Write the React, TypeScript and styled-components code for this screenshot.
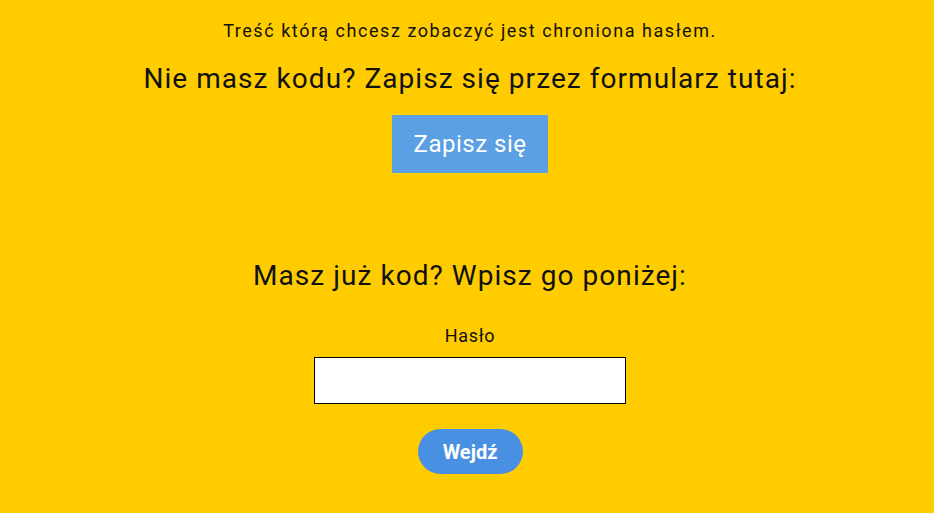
import styled, { createGlobalStyle } from "styled-components";

const yellow = "#ffcc00";
const ink = "#111111";

const GlobalStyle = createGlobalStyle`
  html, body {
    margin: 0;
    padding: 0;
    background: ${yellow};
  }
  body {
    font-family: Roboto, "Noto Sans", sans-serif;
    color: ${ink};
  }
`;

const Page = styled.main`
  min-height: 513px;
  display: flex;
  flex-direction: column;
  align-items: center;
  padding: 19px 0 0 6px;
  box-sizing: border-box;
`;

const Notice = styled.p`
  margin: 0;
  font-size: 18px;
  line-height: 24px;
  letter-spacing: 1.55px;
`;

interface HeadingProps {
  gap: number;
}

const Heading = styled.h2<HeadingProps>`
  margin: ${(props) => props.gap}px 0 0;
  font-size: 28px;
  line-height: 36px;
  font-weight: 400;
  letter-spacing: 1.05px;
`;

const SignupButton = styled.a`
  margin-top: 18px;
  display: flex;
  align-items: center;
  justify-content: center;
  width: 156px;
  height: 58px;
  background: #5aa0e2;
  color: #ffffff;
  font-size: 24px;
  letter-spacing: 0.5px;
  text-decoration: none;
`;

const Form = styled.form`
  display: flex;
  flex-direction: column;
  align-items: center;
  margin-top: 30px;
`;

const Label = styled.label`
  font-size: 18px;
  line-height: 24px;
  letter-spacing: 0.7px;
`;

const PasswordInput = styled.input`
  margin-top: 9px;
  width: 312px;
  height: 47px;
  box-sizing: border-box;
  border: 1px solid #000;
  background: #fff;
  outline: none;
`;

const EnterButton = styled.button`
  margin-top: 25px;
  width: 105px;
  height: 45px;
  border: none;
  border-radius: 23px;
  background: #4a90e2;
  color: #fff;
  font-family: Roboto, "Noto Sans", sans-serif;
  font-size: 20px;
  font-weight: 700;
`;

export default function App() {
  return (
    <>
      <GlobalStyle />
      <Page>
        <Notice>Treść którą chcesz zobaczyć jest chroniona hasłem.</Notice>
        <Heading gap={18}>Nie masz kodu? Zapisz się przez formularz tutaj:</Heading>
        <SignupButton href="#">Zapisz się</SignupButton>
        <Heading gap={85}>Masz już kod? Wpisz go poniżej:</Heading>
        <Form onSubmit={(e) => e.preventDefault()}>
          <Label htmlFor="pass">Hasło</Label>
          <PasswordInput id="pass" type="password" />
          <EnterButton type="submit">Wejdź</EnterButton>
        </Form>
      </Page>
    </>
  );
}
